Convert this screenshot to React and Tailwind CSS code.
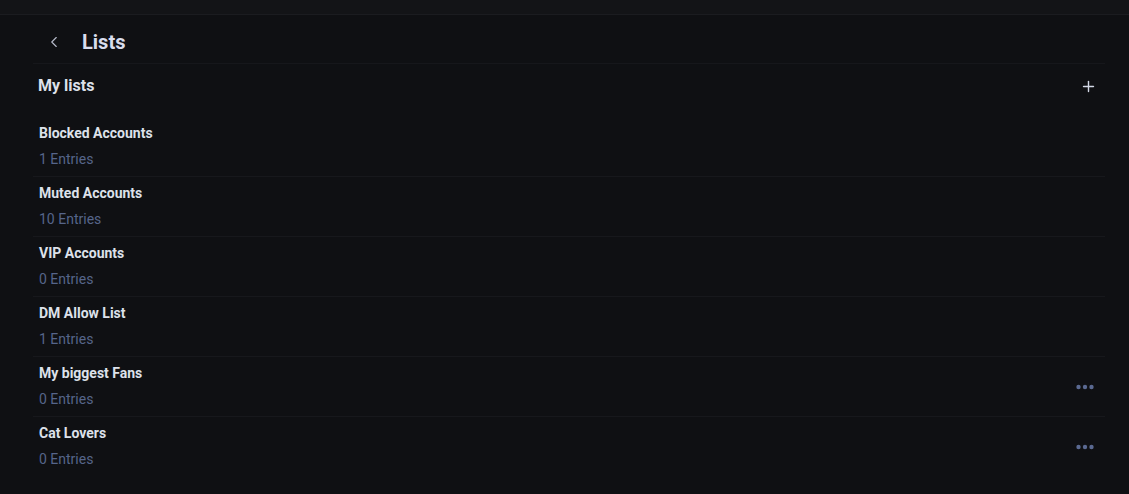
import { ChevronLeft, Plus } from "lucide-react"

const lists = [
  { id: "blocked", name: "Blocked Accounts", count: 1 },
  { id: "muted", name: "Muted Accounts", count: 10 },
  { id: "vip", name: "VIP Accounts", count: 0 },
  { id: "dm", name: "DM Allow List", count: 1 },
  { id: "fans", name: "My biggest Fans", count: 0, custom: true },
  { id: "cats", name: "Cat Lovers", count: 0, custom: true },
]

const MoreDots = () => (
  <svg width="18" height="6" viewBox="0 0 18 6" className="text-[#5a6991]">
    <circle cx="2.5" cy="3" r="2.2" fill="currentColor" />
    <circle cx="9" cy="3" r="2.2" fill="currentColor" />
    <circle cx="15.5" cy="3" r="2.2" fill="currentColor" />
  </svg>
)

const ListRow = ({ list, last }) => (
  <div
    className={`flex items-center justify-between pl-[6px] pr-[7px] pt-[7px] pb-[7px] ${
      last ? "" : "border-b border-[#17181c]"
    }`}
  >
    <div>
      <div className="text-[14px] leading-[18px] font-bold text-[#dde1ea]">{list.name}</div>
      <div className="mt-[7px] text-[14px] leading-[20px] text-[#56658a]">{list.count} Entries</div>
    </div>
    {list.custom && (
      <button className="p-1">
        <MoreDots />
      </button>
    )}
  </div>
)

export default function App() {
  return (
    <div className="min-h-[494px] bg-[#0f1013] font-['Roboto',sans-serif]">
      <div className="h-[15px] bg-[#131417] border-b border-[#1b1c20]" />
      <div className="ml-[33px] w-[1072px]">
        <div className="flex items-center h-[49px] pt-[5px] border-b border-[#16171b]">
          <ChevronLeft className="ml-[12px] h-[18px] w-[18px] text-[#b7bccb]" strokeWidth={1.5} />
          <h1 className="ml-[19px] text-[20px] font-bold text-[#d9dded]">Lists</h1>
        </div>
        <div className="flex items-center justify-between h-[42px] pt-[2px] pl-[5px] pr-[8px]">
          <h2 className="text-[16px] font-bold text-[#dde1ea]">My lists</h2>
          <Plus className="h-[17px] w-[17px] text-[#d3d8e6]" strokeWidth={2} />
        </div>
        <div className="mt-[11px]">
          {lists.map((list, i) => (
            <ListRow key={list.id} list={list} last={i === lists.length - 1} />
          ))}
        </div>
      </div>
    </div>
  )
}
